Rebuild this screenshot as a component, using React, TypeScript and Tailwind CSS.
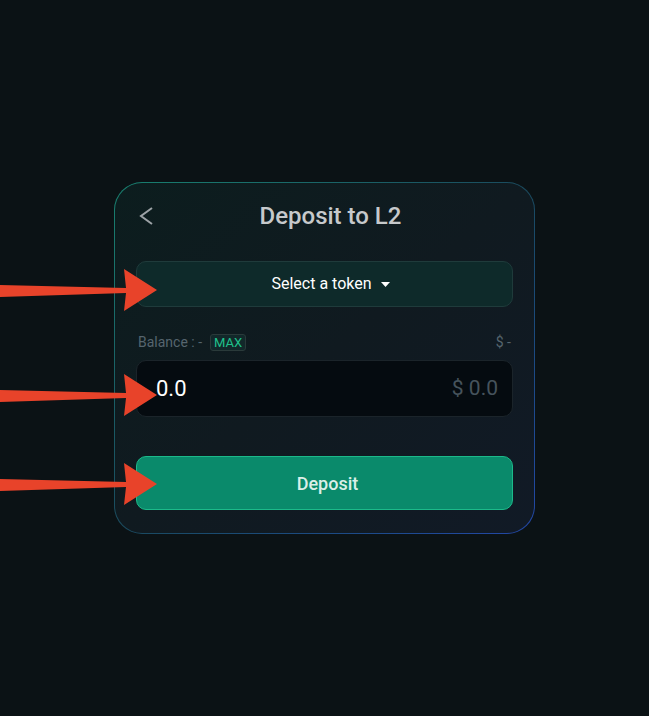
import React from 'react';

function Arrows() {
    // red annotation arrows that sit over the card
    const arrow = (tipY: number) => (
        <polygon
            key={tipY}
            fill="#e8432a"
            points={`0,${tipY - 5} 126,${tipY - 2} 124,${tipY - 21} 157,${tipY} 124,${tipY + 21} 126,${tipY + 3} 0,${tipY + 7}`}
        />
    );
    return (
        <svg className="absolute left-0 top-0 pointer-events-none" width="649" height="716">
            {[290, 395, 484].map(arrow)}
        </svg>
    );
}

export default function App() {
    return (
        <div
            className="relative w-full h-[716px] bg-[#0b1215] flex items-center justify-center"
            style={{ fontFamily: 'Roboto, "Noto Sans", sans-serif' }}
        >
            <div className="w-[421px] h-[352px] rounded-[28px] p-px bg-gradient-to-br from-[#18806f] via-[#1a4a5e] to-[#2347a8]">
                <div className="w-full h-full rounded-[27px] bg-gradient-to-br from-[#0c1d1e] via-[#101a20] to-[#111a26] px-[21px] pt-[19px] flex flex-col">
                    <div className="relative h-[28px] flex items-center justify-center pl-[12px]">
                        <svg className="absolute left-[2px] top-[5px]" width="16" height="18" viewBox="0 0 16 18">
                            <path d="M14 1 L3 9 L14 17" fill="none" stroke="#9da3a7" strokeWidth="2" />
                        </svg>
                        <span className="text-[24px] font-medium text-[#c6c9cb]">Deposit to L2</span>
                    </div>

                    <button className="mt-[31px] h-[46px] w-full rounded-[10px] bg-[#0e2a2a] border border-[#1f3b3b] flex items-center justify-center gap-[9px] pl-[12px] text-white text-[16px]">
                        Select a token
                        <svg width="9" height="5" viewBox="0 0 9 5">
                            <path d="M0 0 L9 0 L4.5 5 Z" fill="#ffffff" />
                        </svg>
                    </button>

                    <div className="mt-[26px] h-[18px] flex items-center justify-between px-[2px] text-[14px] text-[#56656e]">
                        <div className="flex items-center gap-[8px]">
                            <span>Balance : -</span>
                            <span className="text-[13px] leading-none text-[#1fc18c] border border-[#2a3a3a] bg-[#12282a] rounded-[3px] px-[3px] py-[1px]">MAX</span>
                        </div>
                        <span>$ -</span>
                    </div>

                    <div className="mt-[9px] h-[57px] rounded-[10px] bg-[#050b10] border border-[#1b242a] flex items-center justify-between pl-[19px] pr-[14px]">
                        <span className="text-[22px] text-white">0.0</span>
                        <span className="text-[21px] text-[#46535c]">$ 0.0</span>
                    </div>

                    <button className="mt-[39px] h-[54px] w-full rounded-[10px] bg-[#0a8a6b] border border-[#1cba8a] flex items-center justify-center pl-[6px] text-[18px] font-medium text-[#dbefe8]">
                        Deposit
                    </button>
                </div>
            </div>
            <Arrows />
        </div>
    );
}
